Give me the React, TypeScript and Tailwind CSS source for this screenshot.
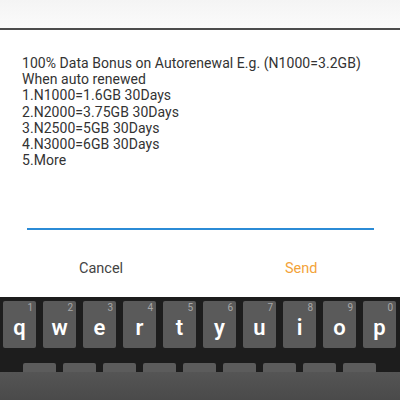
import React from "react";

const top = ["q", "w", "e", "r", "t", "y", "u", "i", "o", "p"];
const nums = ["1", "2", "3", "4", "5", "6", "7", "8", "9", "0"];

export default function App() {
  return (
    <div className="w-[400px] h-[400px] overflow-hidden flex flex-col bg-white" style={{ fontFamily: "Roboto, 'Liberation Sans', sans-serif" }}>
      <div className="h-[28px] bg-gradient-to-b from-[#f4f4f4] to-[#fbfbfb]" />
      <div className="h-[2px] bg-[#4d4d4d]" />
      <div className="h-[267px] bg-white flex flex-col">
        <div className="pl-[22px] pt-[25px] text-[14px] leading-[16.2px] tracking-[0.05px] text-[#333333]">
          <div>100% Data Bonus on Autorenewal E.g. (N1000=3.2GB)</div>
          <div>When auto renewed</div>
          <div>1.N1000=1.6GB 30Days</div>
          <div>2.N2000=3.75GB 30Days</div>
          <div>3.N2500=5GB 30Days</div>
          <div>4.N3000=6GB 30Days</div>
          <div>5.More</div>
        </div>
        <div className="ml-[27px] w-[347px] h-[2px] bg-[#2b8bd6] mt-[60px]" />
        <div className="flex mt-[30px] text-[14.5px] leading-[18px]">
          <div className="w-[200px] pl-[79px] text-[#444444]">Cancel</div>
          <div className="pl-[85px] text-[#f3a33a]">Send</div>
        </div>
      </div>
      <div className="bg-[#1d1d1d] h-[75px] flex flex-col">
        <div className="flex gap-[7px] pl-[3px] pt-[4px]">
          {top.map((k, i) => (
            <div key={k} className="relative w-[33px] h-[47px] shrink-0 bg-[#5a5a5a] rounded-[2px] flex items-center justify-center">
              <span className="absolute top-[1px] right-[3px] text-[10px] leading-[11px] text-[#a8a8a8]">{nums[i]}</span>
              <span className="text-[22px] leading-[22px] text-white font-semibold mt-[6px]">{k}</span>
            </div>
          ))}
        </div>
        <div className="flex gap-[7px] pl-[23px] mt-[15px]">
          {Array.from({ length: 9 }).map((_, i) => (
            <div key={i} className="w-[33px] h-[9px] shrink-0 bg-[#5c5c5c] rounded-t-[2px]" />
          ))}
        </div>
      </div>
      <div className="flex-1 bg-gradient-to-b from-[#555555] to-[#4a4a4a]" />
    </div>
  );
}
